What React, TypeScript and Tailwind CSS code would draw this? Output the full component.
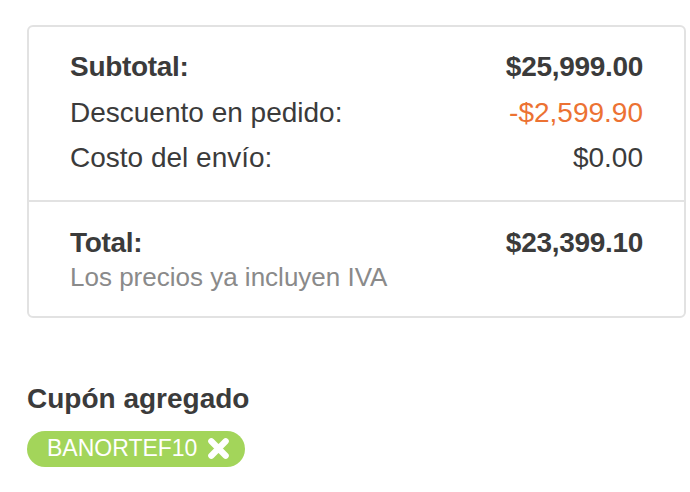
const rows = [
    { label: 'Subtotal:', value: '$25,999.00', bold: true, color: 'text-[#3b3b3b]' },
    { label: 'Descuento en pedido:', value: '-$2,599.90', bold: false, color: 'text-[#ec7233]' },
    { label: 'Costo del envío:', value: '$0.00', bold: false, color: 'text-[#3b3b3b]' },
]

export default function App() {
    return (
        <div className="min-h-screen bg-white font-['Liberation_Sans',Arial,sans-serif] text-[#3b3b3b] pl-[27px] pr-[4px] pt-[25px]">
            {/* Order summary card */}
            <div className="border-2 border-[#e2e2e2] rounded-[6px]">
                <div className="px-[41px] pt-[17px] pb-[19px]">
                    {rows.map((row) => (
                        <div key={row.label} className="flex justify-between items-center text-[28px] leading-[45.5px]">
                            <span className={row.bold ? 'font-bold tracking-[-0.3px]' : ''}>{row.label}</span>
                            <span className={`${row.color} ${row.bold ? 'font-bold tracking-[-0.3px]' : ''}`}>{row.value}</span>
                        </div>
                    ))}
                </div>
                <div className="border-t-2 border-[#e2e2e2] px-[41px] pt-[24px] pb-[22px]">
                    <div className="flex justify-between items-center text-[28px] leading-[34px] font-bold tracking-[-0.3px]">
                        <span>Total:</span>
                        <span>$23,399.10</span>
                    </div>
                    <div className="text-[26px] leading-[34px] text-[#8a8a8a]">Los precios ya incluyen IVA</div>
                </div>
            </div>

            {/* Coupon */}
            <div className="mt-[66px] text-[28px] leading-[30px] font-bold">Cupón agregado</div>
            <div className="mt-[17px] inline-flex items-center gap-[9px] h-[36px] pl-[20px] pr-[14px] rounded-full bg-[#a3d55a] text-white text-[23px]">
                <span>BANORTEF10</span>
                <svg viewBox="0 0 24 24" className="w-[25px] h-[23px]" fill="none" stroke="white" strokeWidth="6.5" strokeLinecap="round">
                    <path d="M4.5 4.5 L19.5 19.5 M19.5 4.5 L4.5 19.5" />
                </svg>
            </div>
        </div>
    )
}
